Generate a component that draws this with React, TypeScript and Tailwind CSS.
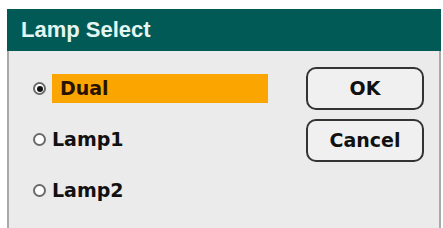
const rows = [
  { label: 'Dual', selected: true },
  { label: 'Lamp1', selected: false },
  { label: 'Lamp2', selected: false },
];

function Radio({ checked }: { checked: boolean }) {
  return (
    <span className="flex h-[13px] w-[13px] shrink-0 items-center justify-center rounded-full border-2 border-[#6a6a6a] bg-white">
      {checked && <span className="h-[6px] w-[6px] rounded-full bg-[#111]" />}
    </span>
  );
}

export default function App() {
  return (
    <div className="h-[228px] w-[443px] overflow-hidden bg-white pl-[7px] pr-[2px] pt-[9px] font-['Liberation_Sans',Arial,sans-serif]">
      <div className="flex h-full flex-col">
        <div className="flex h-[42px] items-center bg-[#025a57] pl-[14px]">
          <span className="text-[22px] font-bold leading-none text-[#e4f6f1]">Lamp Select</span>
        </div>
        <div className="flex flex-1 border-x-2 border-[#a9a9a9] bg-[#ebebeb]">
          <div className="flex flex-col pl-[24px] pt-[23px]">
            {rows.map((row) => (
              <div key={row.label} className="flex h-[29px] items-center mb-[22px]">
                <Radio checked={row.selected} />
                {row.selected ? (
                  <span className="ml-[6px] flex h-[29px] w-[216px] items-center bg-[#fba500] pl-[8px] font-['DejaVu_Sans',sans-serif] text-[19px] font-bold text-[#2a1200]">
                    {row.label}
                  </span>
                ) : (
                  <span className="ml-[6px] font-['DejaVu_Sans',sans-serif] text-[19px] font-bold text-[#111]">
                    {row.label}
                  </span>
                )}
              </div>
            ))}
          </div>
          <div className="ml-auto mr-[15px] flex flex-col gap-[9px] pt-[16px]">
            {['OK', 'Cancel'].map((b) => (
              <button
                key={b}
                className="flex h-[43px] w-[118px] items-center justify-center rounded-[10px] border-2 border-[#333] bg-[#f0f0f0] font-['DejaVu_Sans',sans-serif] text-[19px] font-bold text-[#111]"
              >
                {b}
              </button>
            ))}
          </div>
        </div>
      </div>
    </div>
  );
}
